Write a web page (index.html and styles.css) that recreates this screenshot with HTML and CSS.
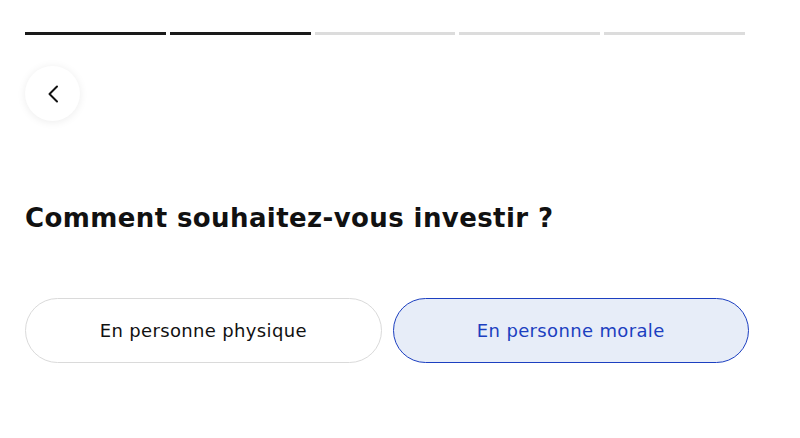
FILE: index.html
```html
<!DOCTYPE html>
<html lang="fr">
<head>
  <meta charset="UTF-8">
  <meta name="viewport" content="width=device-width, initial-scale=1.0">
  <title>Investir</title>
  <link rel="stylesheet" href="styles.css">
</head>
<body>

  <!-- Progress -->
  <div class="progress">
    <span class="step done"></span>
    <span class="step done"></span>
    <span class="step"></span>
    <span class="step"></span>
    <span class="step"></span>
  </div>

  <!-- Back button -->
  <button class="back-btn" aria-label="Retour">
    <svg width="12" height="18" viewBox="0 0 12 18">
      <path d="M10 1.5 L2.5 9 L10 16.5" fill="none" stroke="#111" stroke-width="2" stroke-linecap="round" stroke-linejoin="round"/>
    </svg>
  </button>

  <!-- Question -->
  <h1 class="question">Comment souhaitez-vous investir ?</h1>

  <div class="choices">
    <button class="choice">En personne physique</button>
    <button class="choice selected">En personne morale</button>
  </div>

</body>
</html>
```

FILE: styles.css
```css
/* Basic Reset */
* {
  margin: 0;
  padding: 0;
  box-sizing: border-box;
}

body {
  font-family: "DejaVu Sans", Arial, sans-serif;
  background-color: #fff;
  color: #111;
  padding: 32px 51px 0 25px;
}

/* Progress bar */
.progress {
  display: flex;
  gap: 4px;
  width: 720px;
}

.step {
  flex: 1;
  height: 3px;
  background-color: #dcdcdc;
}

.step.done {
  background-color: #1a1a1a;
}

/* Back button */
.back-btn {
  display: flex;
  align-items: center;
  justify-content: center;
  width: 55px;
  height: 55px;
  margin-top: 31px;
  border: none;
  border-radius: 50%;
  background-color: #fff;
  box-shadow: 0 1px 8px rgba(0, 0, 0, 0.08);
  cursor: pointer;
}

/* Question */
.question {
  margin-top: 80px;
  font-family: "DejaVu Sans", sans-serif;
  font-size: 26px;
  font-weight: 700;
  letter-spacing: 0.4px;
  line-height: 34px;
}

/* Choices */
.choices {
  display: flex;
  gap: 11px;
  margin-top: 63px;
  width: 724px;
}

.choice {
  flex: 1;
  height: 65px;
  border: 1px solid #dadada;
  border-radius: 33px;
  background-color: #fff;
  font-family: "DejaVu Sans", sans-serif;
  font-size: 18px;
  letter-spacing: 0.35px;
  color: #111;
  cursor: pointer;
}

.choice.selected {
  border-color: #1c3fc0;
  background-color: #e7edf8;
  color: #1c3fc0;
}
```
